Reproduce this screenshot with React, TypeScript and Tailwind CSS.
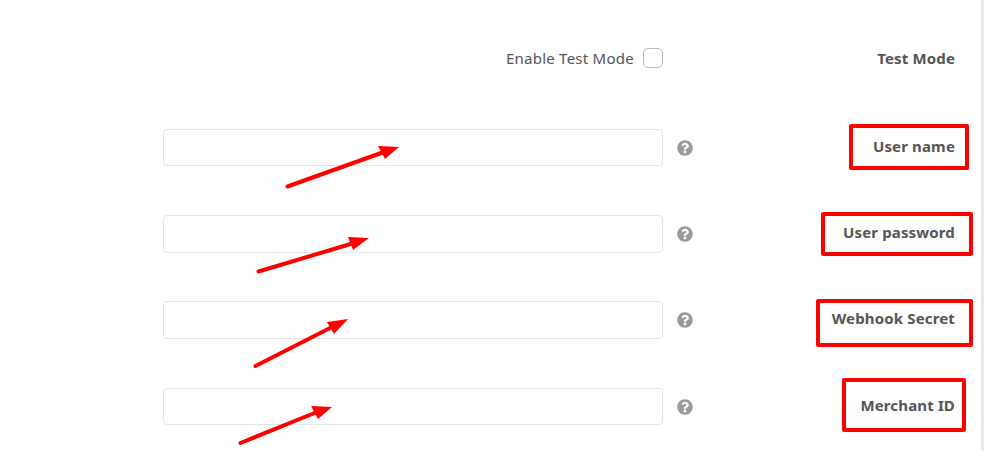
import { FaQuestionCircle } from 'react-icons/fa';

const fields = ['User name', 'User password', 'Webhook Secret', 'Merchant ID'];

// red boxes drawn over the screenshot
const boxes = [
  'left-[849px] top-[124px] w-[120px] h-[46px]',
  'left-[821px] top-[212px] w-[152px] h-[44px]',
  'left-[816px] top-[299px] w-[157px] h-[48px]',
  'left-[842px] top-[378px] w-[124px] h-[54px]',
];

const arrows = [
  { line: 'M287.5 186.5 L384 152', head: '399,147 378,146 385,159' },
  { line: 'M258.5 271.5 L354 243', head: '369,238 348,237 353,250' },
  { line: 'M255.5 366 L334 326', head: '348,319 327,322 334,334' },
  { line: 'M240.5 443 L317 412', head: '332,407 311,406 318,419' },
];

function App() {
  return (
    <div className="relative w-[989px] h-[451px] overflow-hidden bg-white font-['Noto_Sans','Open_Sans',sans-serif] text-[#555]">
      <div className="w-[984px] h-full border-r-[3px] border-[#e8e8e8] pt-[46px]">
        <div className="flex items-center h-[24px]">
          <div className="w-[663px] flex items-center justify-end gap-[9px]">
            <span className="text-[15px] tracking-[0.25px]">Enable Test Mode</span>
            <div className="w-[20px] h-[20px] rounded-[5px] border border-[#bbb] bg-white"></div>
          </div>
          <div className="flex-1 text-right pr-[26px] text-[15px] font-bold tracking-[0.15px]">Test Mode</div>
        </div>
        <div className="flex flex-col gap-[48.83px] mt-[58.7px]">
          {fields.map((f) => (
            <div key={f} className="flex items-center h-[37.5px]">
              <input className="ml-[163px] w-[500px] h-[37.5px] rounded-[4px] border border-[#e3e3e3] bg-white" />
              <FaQuestionCircle className="ml-[14px] mt-[0.5px] w-[16px] h-[16px] text-[#999]" />
              <div className="flex-1 text-right pr-[26px] mb-[3px] text-[15px] font-bold tracking-[0.15px]">{f}</div>
            </div>
          ))}
        </div>
      </div>
      {boxes.map((b) => (
        <div key={b} className={`absolute ${b} border-[4px] border-[#f00] rounded-[2px]`}></div>
      ))}
      <svg className="absolute inset-0" width="989" height="451">
        {arrows.map((a) => (
          <g key={a.line}>
            <path d={a.line} stroke="#f00" strokeWidth="4" strokeLinecap="round" fill="none" />
            <polygon points={a.head} fill="#f00" />
          </g>
        ))}
      </svg>
    </div>
  );
}

export default App;
